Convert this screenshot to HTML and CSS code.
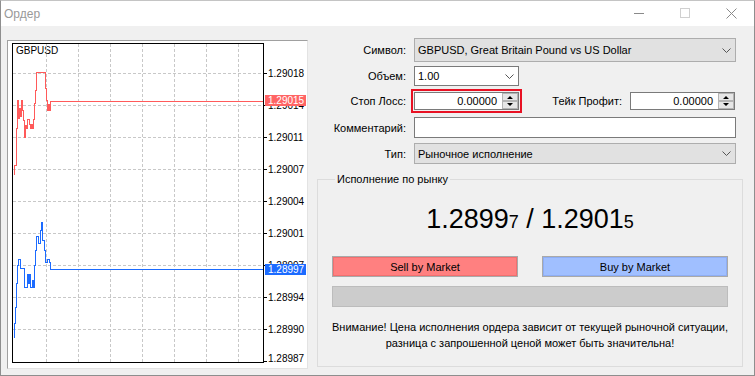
FILE: index.html
```html
<!DOCTYPE html>
<html lang="ru">
<head>
    <meta charset="UTF-8">
    <meta name="viewport" content="width=device-width, initial-scale=1.0">
    <title>Ордер</title>
    <link rel="stylesheet" href="styles.css">
</head>
<body>
    <div id="window">
        <div class="titlebar">
            <span class="title">Ордер</span>
            <div class="caption">
                <span class="cap-btn">
                    <svg width="11" height="11" viewBox="0 0 11 11"><path d="M0 5.5H10" stroke="#8a8a8a"/></svg>
                </span>
                <span class="cap-btn">
                    <svg width="11" height="11" viewBox="0 0 11 11"><rect x="0.5" y="0.5" width="9" height="9" fill="none" stroke="#d0d0d0"/></svg>
                </span>
                <span class="cap-btn">
                    <svg width="11" height="11" viewBox="0 0 11 11"><path d="M0.5 0.5L10.5 10.5M10.5 0.5L0.5 10.5" stroke="#8a8a8a"/></svg>
                </span>
            </div>
        </div>

        <div class="content">
            <div class="chart-box">
                <svg class="chart" width="299" height="327" viewBox="8 41 299 327">
                    <defs>
                        <clipPath id="under-ask"><rect x="264" y="106" width="43" height="6"/></clipPath>
                        <clipPath id="under-bid"><rect x="264" y="258" width="43" height="6"/></clipPath>
                    </defs>
                    <text x="16" y="54" class="sym">GBPUSD</text>
                    <!-- сетка -->
                    <path class="grid" d="M46.5 44V362M78.5 44V362M110.5 44V362M142.5 44V362M174.5 44V362M206.5 44V362M238.5 44V362
                        M13 73.5H263M13 105.5H263M13 137.5H263M13 169.5H263M13 201.5H263M13 233.5H263M13 265.5H263M13 297.5H263M13 329.5H263"/>
                    <rect x="12.5" y="43.5" width="251" height="319" fill="none" stroke="#000"/>
                    <path class="tick" d="M264 73.5h3M264 105.5h3M264 137.5h3M264 169.5h3M264 201.5h3M264 233.5h3M264 265.5h3M264 297.5h3M264 329.5h3M264 361.5h3"/>
                    <g class="axis">
                        <text x="268" y="77">1.29018</text>
                        <text x="268" y="109" clip-path="url(#under-ask)">1.29014</text>
                        <text x="268" y="141">1.29011</text>
                        <text x="268" y="173">1.29007</text>
                        <text x="268" y="205">1.29004</text>
                        <text x="268" y="237">1.29001</text>
                        <text x="268" y="269" clip-path="url(#under-bid)">1.28997</text>
                        <text x="268" y="301">1.28994</text>
                        <text x="268" y="333">1.28990</text>
                        <text x="268" y="362">1.28987</text>
                    </g>
                    <polyline class="ask" points="14,175 14,165 16,165 16,128 17,128 17,100 18,100 18,118 19,118 19,108 20,108 20,116 21,116 21,100 22,100 22,110 23,110 23,120 24,120 24,137 25,137 25,125 26,125 26,128 27,128 27,119 29,119 29,124 30,124 30,128 31,128 31,124 32,124 32,128 33,128 33,119 34,119 34,103 35,103 35,90 36,90 36,72 45,72 45,88 46,88 46,100 47,100 47,110 48,110 48,104 49,104 49,110 50,110 50,101 263,101"/>
                    <polyline class="bid" points="14,338 14,323 15,323 15,307 16,307 16,283 17,283 17,265 18,265 18,259 20,259 20,268 24,268 24,287 27,287 27,274 28,274 28,283 29,283 29,274 30,274 30,287 32,287 32,280 33,280 33,287 34,287 34,265 35,265 35,250 36,250 36,236 38,236 38,243 40,243 40,230 41,230 41,222 42,222 42,240 44,240 44,250 45,250 45,262 47,262 47,259 49,259 49,262 50,262 50,269 263,269"/>
                    <rect x="265" y="95" width="41" height="11" fill="#ff6464"/>
                    <text x="268" y="104" class="tag">1.29015</text>
                    <rect x="265" y="264" width="41" height="11" fill="#1c6bff"/>
                    <text x="268" y="273" class="tag">1.28997</text>
                </svg>
            </div>

            <div class="order">
                <ul class="fields">
                    <li class="row-symbol">
                        <label class="field">Символ:</label>
                        <div class="combo grey wide">
                            <span>GBPUSD, Great Britain Pound vs US Dollar</span>
                            <svg class="chev" width="9" height="5" viewBox="0 0 9 5"><path d="M0.5 0.5L4.5 4.5L8.5 0.5" fill="none" stroke="#555"/></svg>
                        </div>
                    </li>
                    <li class="row-volume">
                        <label class="field">Объем:</label>
                        <div class="combo white volume">
                            <span>1.00</span>
                            <svg class="chev" width="9" height="5" viewBox="0 0 9 5"><path d="M0.5 0.5L4.5 4.5L8.5 0.5" fill="none" stroke="#555"/></svg>
                        </div>
                    </li>
                    <li class="row-stops">
                        <label class="field">Стоп Лосс:</label>
                        <div class="focus-frame">
                            <div class="spin-input">
                                <span class="value">0.00000</span>
                                <svg class="spinner" width="16" height="16" viewBox="0 0 16 16">
                                    <rect x="0.5" y="0.5" width="15" height="7" fill="#e6e6e6" stroke="#b4b4b4"/>
                                    <rect x="0.5" y="8.5" width="15" height="7" fill="#e6e6e6" stroke="#b4b4b4"/>
                                    <path d="M5 6H11L8 3Z M5 10H11L8 13Z" fill="#000"/>
                                </svg>
                            </div>
                        </div>
                        <label class="take-label">Тейк Профит:</label>
                        <div class="spin-input take">
                            <span class="value">0.00000</span>
                            <svg class="spinner" width="16" height="16" viewBox="0 0 16 16">
                                <rect x="0.5" y="0.5" width="15" height="7" fill="#e6e6e6" stroke="#b4b4b4"/>
                                <rect x="0.5" y="8.5" width="15" height="7" fill="#e6e6e6" stroke="#b4b4b4"/>
                                <path d="M5 6H11L8 3Z M5 10H11L8 13Z" fill="#000"/>
                            </svg>
                        </div>
                    </li>
                    <li class="row-comment">
                        <label class="field">Комментарий:</label>
                        <div class="text-input wide"></div>
                    </li>
                    <li class="row-type">
                        <label class="field">Тип:</label>
                        <div class="combo grey wide">
                            <span>Рыночное исполнение</span>
                            <svg class="chev" width="9" height="5" viewBox="0 0 9 5"><path d="M0.5 0.5L4.5 4.5L8.5 0.5" fill="none" stroke="#555"/></svg>
                        </div>
                    </li>
                </ul>

                <fieldset class="market">
                    <legend>Исполнение по рынку</legend>
                    <div class="quote">1.2899<span class="last">7</span> / 1.2901<span class="last">5</span></div>
                    <div class="buttons">
                        <button type="button" class="sell">Sell by Market</button>
                        <button type="button" class="buy">Buy by Market</button>
                    </div>
                    <div class="progress"></div>
                    <p class="note">Внимание! Цена исполнения ордера зависит от текущей рыночной ситуации,<br>разница с запрошенной ценой может быть значительна!</p>
                </fieldset>
            </div>
        </div>
    </div>
</body>
</html>
```

FILE: styles.css
```css
*{
    box-sizing: border-box;
}
html, body{
    margin: 0;
    background: #fff;
}
body{
    font-family: "Liberation Sans", Arial, sans-serif;
    font-size: 11px;
    color: #000;
}
#window{
    width: 755px; height: 376px;
    border: 1px solid #8e8e8e; border-top-color: #c4c4c4;
    display: flex; flex-direction: column;
    background: #f0f0f0;
}
.titlebar{
    flex: none; height: 25px; background: #fff;
    display: flex; align-items: center;
}
.title{
    padding-left: 3px; font-size: 12px; color: #999;
}
.caption{
    margin-left: auto; display: flex;
}
.cap-btn{
    width: 46px; height: 25px;
    display: flex; align-items: center; justify-content: center;
}

.content{
    flex: 1; display: flex; align-items: flex-start;
}
.chart-box{
    margin: 14px 0 0 6px; line-height: 0; background: #fff;
    border: 1px solid; border-color: #a0a0a0 #e3e3e3 #e3e3e3 #a0a0a0;
}
.chart{
    display: block;
}
.chart text{
    font-family: "Liberation Sans", Arial, sans-serif; font-size: 10px; fill: #000;
}
.chart .tag{
    fill: #fff;
}
.grid{
    fill: none; stroke: #c8c8c8; stroke-dasharray: 3 2; shape-rendering: crispEdges;
}
.tick{
    stroke: #000; shape-rendering: crispEdges;
}
.ask, .bid{
    fill: none; stroke-width: 1; shape-rendering: crispEdges;
}
.ask{ stroke: #ff5a5a; }
.bid{ stroke: #1c6bff; }

/* правая часть */
.order{
    margin-left: 9px; width: 426px; padding-top: 12px;
}
.fields{
    list-style: none; margin: 0; padding: 0 7px 0 0;
}
.fields li{
    display: flex; align-items: center;
}
.row-symbol{ height: 24px; margin-bottom: 4px; }
.row-volume{ height: 20px; margin-bottom: 3px; }
.row-stops{ height: 24px; margin-bottom: 4px; }
.row-comment{ height: 21px; margin-bottom: 5px; }
.row-type{ height: 21px; }

.field{
    width: 89px; margin-right: 8px; text-align: right; flex: none;
}
.combo{
    height: 100%; display: flex; align-items: center;
    padding-left: 3px; white-space: nowrap;
}
.combo .chev{
    margin-left: auto; margin-right: 4px;
}
.grey{
    border: 1px solid #adadad; background: #e1e1e1;
}
.white{
    border: 1px solid #7a7a7a; background: #fff;
}
.wide{
    flex: 1;
}
.volume{
    width: 105px;
}
.text-input{
    height: 100%; border: 1px solid #7a7a7a; background: #fff;
}
.focus-frame{
    margin-left: -3px; width: 111px; height: 24px;
    border: 2px solid #e81123; padding: 1px;
}
.spin-input{
    width: 105px; height: 18px;
    display: flex; align-items: center;
    border: 1px solid #7a7a7a; background: #fff;
}
.spin-input .value{
    flex: 1; text-align: right; padding-right: 5px;
}
.spinner{
    flex: none;
}
.take-label{
    margin-left: auto; margin-right: 8px;
}
.take{
    margin-right: 1px;
}

.market{
    margin: 9px 0 0 0; padding: 0 14px 15px;
    border: 1px solid #dcdcdc; min-width: 0;
}
.market legend{
    margin-left: 3px; padding: 0 2px; line-height: 13px;
}
.quote{
    margin-top: 18px; text-align: center;
    font-size: 27px; line-height: 30px;
}
.quote .last{
    font-size: 18px;
}
.buttons{
    margin-top: 19px; display: flex; justify-content: space-between;
}
.buttons button{
    width: 186px; height: 21px; padding: 0;
    font-family: inherit; font-size: 11px; color: #000;
    border: 1px solid #a9a9a9;
}
.sell{
    background: #ff8080; box-shadow: inset 0 0 0 1px #f26f6f;
}
.buy{
    background: #a0bfff; box-shadow: inset 0 0 0 1px #8eaef5;
}
.progress{
    margin-top: 9px; height: 21px;
    background: #cccccc; border: 1px solid #bcbcbc;
}
.note{
    margin: 12px 0 0; text-align: center; line-height: 16px;
}
```
